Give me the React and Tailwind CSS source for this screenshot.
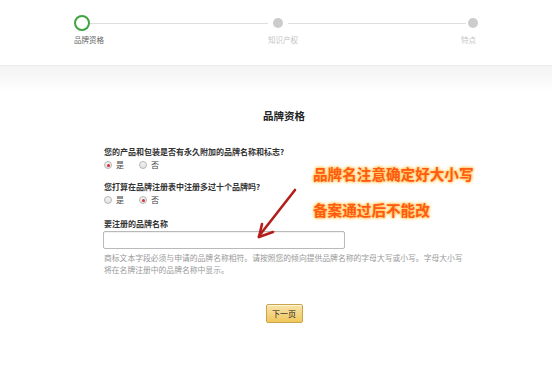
import React, { useState } from 'react';

const FONT = '"Noto Sans CJK SC", "Liberation Sans", sans-serif';

function Radio({ checked, label, onClick }) {
  return (
    <button type="button" onClick={onClick} className="flex items-center h-[12px]">
      <span className="w-[8px] h-[8px] rounded-full border border-[#b5b5b5] bg-gradient-to-b from-[#f4f4f4] to-[#e2e2e2] flex items-center justify-center">
        {checked && <span className="w-[3px] h-[3px] rounded-full bg-[#d9302c]" />}
      </span>
      <span className="ml-[4px] text-[8px] leading-[12px] text-[#444]">{label}</span>
    </button>
  );
}

function Stepper() {
  return (
    <div className="h-[66px] bg-white border-b border-[#ebebeb]">
      <div className="pt-[15px] pl-[74px] w-[478px] flex items-center">
        <div className="w-[16px] h-[16px] rounded-full border-2 border-[#3fa43f] bg-white shrink-0" />
        <div className="flex-1 h-px bg-[#dedede]" />
        <div className="mx-[5px] w-[10px] h-[10px] rounded-full bg-[#cccccc] shrink-0" />
        <div className="flex-1 h-px bg-[#dedede]" />
        <div className="ml-[2px] w-[10px] h-[10px] rounded-full bg-[#cccccc] shrink-0" />
      </div>
      <div className="mt-[4px] pl-[74px] flex text-[7.5px] leading-[10px]">
        <span className="w-[194px] shrink-0 text-[#666]">品牌资格</span>
        <span className="w-[193px] shrink-0 text-[#c4c4c4]">知识产权</span>
        <span className="text-[#c4c4c4]">特点</span>
      </div>
    </div>
  );
}

export default function App() {
  const [q1, setQ1] = useState('yes');
  const [q2, setQ2] = useState('no');
  const [brand, setBrand] = useState('');

  return (
    <div className="relative w-[552px] h-[366px] bg-white overflow-hidden" style={{ fontFamily: FONT }}>
      <Stepper />
      <div className="h-[26px] bg-gradient-to-b from-[#f3f3f3] to-white" />

      <div className="ml-[104px] w-[360px] pt-[17px]">
        <h2 className="text-center text-[10.5px] leading-[14px] font-bold text-[#222]">品牌资格</h2>

        <div className="mt-[23px] text-[8px] leading-[12px] font-bold text-[#333]">
          您的产品和包装是否有永久附加的品牌名称和标志?
        </div>
        <div className="mt-[1px] flex gap-[15px]">
          <Radio checked={q1 === 'yes'} label="是" onClick={() => setQ1('yes')} />
          <Radio checked={q1 === 'no'} label="否" onClick={() => setQ1('no')} />
        </div>

        <div className="mt-[10px] text-[8px] leading-[12px] font-bold text-[#333]">
          您打算在品牌注册表中注册多过十个品牌吗?
        </div>
        <div className="mt-[1px] flex gap-[15px]">
          <Radio checked={q2 === 'yes'} label="是" onClick={() => setQ2('yes')} />
          <Radio checked={q2 === 'no'} label="否" onClick={() => setQ2('no')} />
        </div>

        <div className="mt-[12px] text-[8px] leading-[12px] font-bold text-[#333]">要注册的品牌名称</div>
        <input
          value={brand}
          onChange={(e) => setBrand(e.target.value)}
          className="mt-[1px] -ml-px block w-[242px] h-[18px] border border-[#b9b9b9] rounded-[2px] bg-white px-1 text-[8px] outline-none shadow-[inset_0_1px_1px_rgba(0,0,0,0.06)]"
        />
        <p className="mt-[3px] text-[7.8px] leading-[11.5px] text-[#999]">
          商标文本字段必须与申请的品牌名称相符。请按照您的倾向提供品牌名称的字母大写或小写。字母大小写将在名牌注册中的品牌名称中显示。
        </p>

        <div className="mt-[29px] flex justify-center">
          <button
            type="button"
            className="w-[37px] h-[19px] rounded-[2px] border border-[#c9a64a] bg-gradient-to-b from-[#f8e3a8] to-[#f0c75a] text-[8px] text-[#222] shadow-[0_1px_0_rgba(255,255,255,0.6)_inset]"
          >
            下一页
          </button>
        </div>
      </div>

      {/* annotation overlay */}
      <div className="absolute left-[313px] top-[163px] text-[14.6px] leading-[22px] font-bold text-[#ff5a14] [text-shadow:0_0_2px_#ffc04a,0_0_3px_#ffc04a,0_0_4px_#ffd27a]">
        品牌名注意确定好大小写
      </div>
      <div className="absolute left-[313px] top-[199px] text-[14.6px] leading-[22px] font-bold text-[#ff5a14] [text-shadow:0_0_2px_#ffc04a,0_0_3px_#ffc04a,0_0_4px_#ffd27a]">
        备案通过后不能改
      </div>
      <svg className="absolute left-0 top-0 pointer-events-none" width="552" height="366">
        <g stroke="#b3201c" strokeWidth="2.6" strokeLinecap="round" fill="none">
          <line x1="295" y1="190" x2="259" y2="236" />
          <line x1="259" y1="237" x2="262" y2="224" />
          <line x1="259" y1="237" x2="273" y2="232" />
        </g>
      </svg>
    </div>
  );
}
